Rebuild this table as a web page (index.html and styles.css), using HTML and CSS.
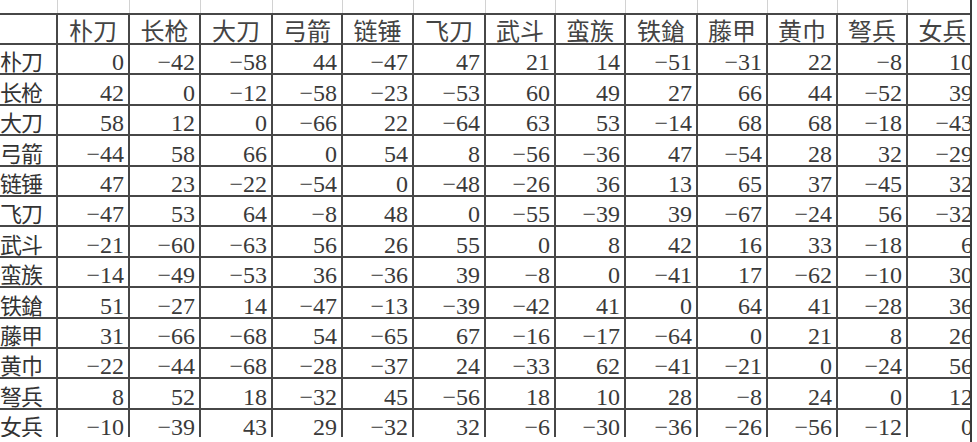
FILE: index.html
```html
<!DOCTYPE html>
<html lang="zh">
<head>
<meta charset="utf-8">
<title>兵种相克表</title>
<link rel="stylesheet" href="styles.css">
</head>
<body>
<div class="frame">
<div class="sheet">
<table class="grid">
<colgroup>
<col class="c-lab"><col class="w72"><col class="w71"><col class="w72"><col class="w70"><col class="w71"><col class="w72"><col class="w70"><col class="w70"><col class="w72"><col class="w70"><col class="w70"><col class="w70"><col class="w71">
</colgroup>
<tr class="blank"><td></td><td></td><td></td><td></td><td></td><td></td><td></td><td></td><td></td><td></td><td></td><td></td><td></td><td></td></tr>
<tr class="head"><th class="corner"></th><th>朴刀</th><th>长枪</th><th>大刀</th><th>弓箭</th><th>链锤</th><th>飞刀</th><th>武斗</th><th>蛮族</th><th>铁鎗</th><th>藤甲</th><th>黄巾</th><th>弩兵</th><th>女兵</th></tr>
<tr><th class="lab">朴刀</th><td>0</td><td>−42</td><td>−58</td><td>44</td><td>−47</td><td>47</td><td>21</td><td>14</td><td>−51</td><td>−31</td><td>22</td><td>−8</td><td>10</td></tr>
<tr><th class="lab">长枪</th><td>42</td><td>0</td><td>−12</td><td>−58</td><td>−23</td><td>−53</td><td>60</td><td>49</td><td>27</td><td>66</td><td>44</td><td>−52</td><td>39</td></tr>
<tr><th class="lab">大刀</th><td>58</td><td>12</td><td>0</td><td>−66</td><td>22</td><td>−64</td><td>63</td><td>53</td><td>−14</td><td>68</td><td>68</td><td>−18</td><td>−43</td></tr>
<tr><th class="lab">弓箭</th><td>−44</td><td>58</td><td>66</td><td>0</td><td>54</td><td>8</td><td>−56</td><td>−36</td><td>47</td><td>−54</td><td>28</td><td>32</td><td>−29</td></tr>
<tr><th class="lab">链锤</th><td>47</td><td>23</td><td>−22</td><td>−54</td><td>0</td><td>−48</td><td>−26</td><td>36</td><td>13</td><td>65</td><td>37</td><td>−45</td><td>32</td></tr>
<tr><th class="lab">飞刀</th><td>−47</td><td>53</td><td>64</td><td>−8</td><td>48</td><td>0</td><td>−55</td><td>−39</td><td>39</td><td>−67</td><td>−24</td><td>56</td><td>−32</td></tr>
<tr><th class="lab">武斗</th><td>−21</td><td>−60</td><td>−63</td><td>56</td><td>26</td><td>55</td><td>0</td><td>8</td><td>42</td><td>16</td><td>33</td><td>−18</td><td>6</td></tr>
<tr><th class="lab">蛮族</th><td>−14</td><td>−49</td><td>−53</td><td>36</td><td>−36</td><td>39</td><td>−8</td><td>0</td><td>−41</td><td>17</td><td>−62</td><td>−10</td><td>30</td></tr>
<tr><th class="lab">铁鎗</th><td>51</td><td>−27</td><td>14</td><td>−47</td><td>−13</td><td>−39</td><td>−42</td><td>41</td><td>0</td><td>64</td><td>41</td><td>−28</td><td>36</td></tr>
<tr><th class="lab">藤甲</th><td>31</td><td>−66</td><td>−68</td><td>54</td><td>−65</td><td>67</td><td>−16</td><td>−17</td><td>−64</td><td>0</td><td>21</td><td>8</td><td>26</td></tr>
<tr><th class="lab">黄巾</th><td>−22</td><td>−44</td><td>−68</td><td>−28</td><td>−37</td><td>24</td><td>−33</td><td>62</td><td>−41</td><td>−21</td><td>0</td><td>−24</td><td>56</td></tr>
<tr><th class="lab">弩兵</th><td>8</td><td>52</td><td>18</td><td>−32</td><td>45</td><td>−56</td><td>18</td><td>10</td><td>28</td><td>−8</td><td>24</td><td>0</td><td>12</td></tr>
<tr><th class="lab">女兵</th><td>−10</td><td>−39</td><td>43</td><td>29</td><td>−32</td><td>32</td><td>−6</td><td>−30</td><td>−36</td><td>−26</td><td>−56</td><td>−12</td><td>0</td></tr>
</table>
</div>
</div>
</body>
</html>
```
FILE: styles.css
```css
html, body {
  margin: 0;
  padding: 0;
  background: #fff;
}

.frame {
  width: 970px;
  height: 442px;
  border-right: 2px solid #3a3a3a;
  overflow: hidden;
}

.sheet {
  height: 437px;
  overflow: hidden;
}

.grid {
  border-collapse: collapse;
  table-layout: fixed;
  width: 978px;
  margin-left: -1px;
  font-family: "Liberation Serif", "Noto Sans CJK SC", serif;
  font-size: 24px;
  color: #3a3a3a;
}

.c-lab { width: 58px; }
.w70 { width: 70px; }
.w71 { width: 71px; }
.w72 { width: 72px; }

.grid td,
.grid th {
  padding: 0 4px 0 0;
  border: 2px solid #474747;
  line-height: 22px;
  vertical-align: bottom;
  text-align: right;
  white-space: nowrap;
  overflow: visible;
  font-weight: normal;
}

.grid tr {
  height: 30.4px;
}

.grid .blank {
  height: 14px;
}

.grid .blank td {
  border: none;
  border-right: 1px solid #d2d2d2;
}

.grid .head {
  height: 30px;
}

.grid .head th {
  font-family: "Noto Sans CJK SC", sans-serif;
  font-size: 24px;
  line-height: 26px;
  text-align: center;
  padding: 0;
  color: #444;
}

.grid .head .corner {
  border-left: none;
}

.grid .lab {
  font-family: "Noto Sans CJK SC", sans-serif;
  font-size: 22px;
  line-height: 26px;
  text-align: left;
  padding: 0 0 0 1px;
  border-left: none;
  color: #333;
  letter-spacing: -1px;
}
```
